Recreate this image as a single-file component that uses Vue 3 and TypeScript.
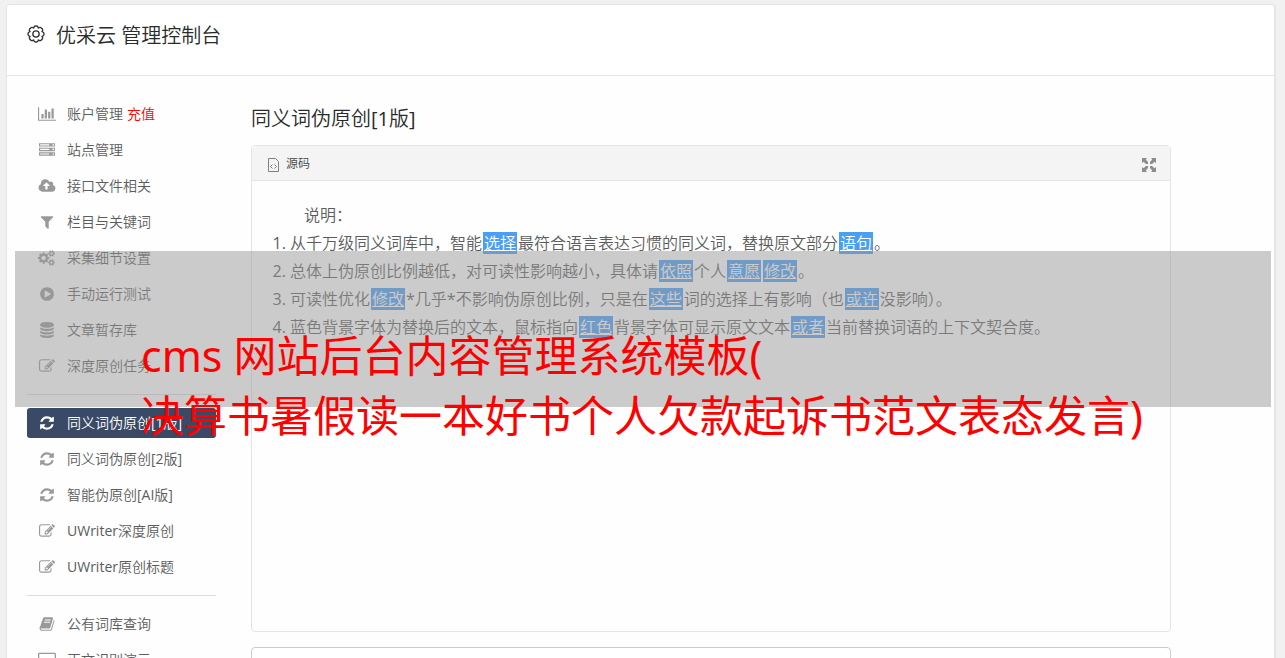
<script setup lang="ts">
interface Icon {
  box: string
  path: string
}

interface MenuItem {
  label: string
  icon: string
  note?: string
  active?: boolean
}

interface Piece {
  text: string
  mark?: boolean
}

const icons: Record<string, Icon> = {
  chart: {
    box: '0 0 2048 1792',
    path: 'M640 896v512h-256v-512h256zm384-512v1024h-256v-1024h256zm1024 1152v128h-2048v-1536h128v1408h1920zm-640-896v768h-256v-768h256zm384-384v1152h-256v-1152h256z',
  },
  server: {
    box: '0 0 1792 1792',
    path: 'M128 1408h1024v-128h-1024v128zm0-512h1024v-128h-1024v128zm1568 448q0-40-28-68t-68-28-68 28-28 68 28 68 68 28 68-28 28-68zm-1568-960h1024v-128h-1024v128zm1568 448q0-40-28-68t-68-28-68 28-28 68 28 68 68 28 68-28 28-68zm0-512q0-40-28-68t-68-28-68 28-28 68 28 68 68 28 68-28 28-68zm96 832v384h-1792v-384h1792zm0-512v384h-1792v-384h1792zm0-512v384h-1792v-384h1792z',
  },
  cloud: {
    box: '-64 0 2048 1792',
    path: 'M1280 864q0-14-9-23l-352-352q-9-9-23-9t-23 9l-351 351q-10 12-10 24 0 14 9 23t23 9h224v352q0 13 9.500 22.500t22.500 9.500h192q13 0 22.500-9.500t9.500-22.500v-352h224q13 0 22.500-9.500t9.500-22.500zm640 288q0 159-112.500 271.500t-271.500 112.500h-1088q-185 0-316.500-131.500t-131.500-316.500q0-130 70-240t188-165q-2-30-2-43 0-212 150-362t362-150q156 0 285.500 87t188.500 231q71-62 166-62 106 0 181 75t75 181q0 76-41 138 130 31 213.500 135.500t83.500 238.500z',
  },
  filter: {
    box: '0 0 1792 1792',
    path: 'M1595 295q17 41-14 70l-493 493v742q0 42-39 59-13 5-25 5-27 0-45-19l-256-256q-19-19-19-45v-486l-493-493q-31-29-14-70 17-39 59-39h1280q42 0 59 39z',
  },
  cogs: {
    box: '-64 0 2048 1792',
    path: 'M832 896q0-106-75-181t-181-75-181 75-75 181 75 181 181 75 181-75 75-181zm768 512q0-52-38-90t-90-38-90 38-38 90q0 53 37.500 90.500t90.500 37.500 90.500-37.500 37.500-90.500zm0-1024q0-52-38-90t-90-38-90 38-38 90q0 53 37.500 90.500t90.500 37.500 90.500-37.500 37.500-90.500zm-384 421v185q0 10-7 19.500t-16 10.500l-155 24q-11 35-32 76 34 48 90 115 7 11 7 20 0 12-7 19-23 30-82.500 89.500t-78.500 59.500q-11 0-21-7l-115-90q-37 19-77 31-11 108-23 155-7 24-30 24h-186q-11 0-20-7.500t-10-17.500l-23-153q-34-10-75-31l-118 89q-7 7-20 7-11 0-21-8-144-133-144-160 0-9 7-19 10-14 41-53t47-61q-23-44-35-82l-152-24q-10-1-17-9.500t-7-19.500v-185q0-10 7-19.500t16-10.500l155-24q11-35 32-76-34-48-90-115-7-11-7-20 0-12 7-20 22-30 82-89t79-59q11 0 21 7l115 90q34-18 77-32 11-108 23-154 7-24 30-24h186q11 0 20 7.500t10 17.500l23 153q34 10 75 31l118-89q8-7 20-7 11 0 21 8 144 133 144 160 0 8-7 19-12 16-42 54t-45 60q23 48 34 82l152 23q10 2 17 10.500t7 19.500zm640 533v140q0 16-149 31-12 27-30 52 51 113 51 138 0 4-4 7-122 71-124 71-8 0-46-47t-52-68q-20 2-30 2t-30-2q-14 21-52 68t-46 47q-2 0-124-71-4-3-4-7 0-25 51-138-18-25-30-52-149-15-149-31v-140q0-16 149-31 13-29 30-52-51-113-51-138 0-4 4-7 4-2 35-20t59-34 30-16q8 0 46 46.500t52 67.500q20-2 30-2t30 2q51-71 92-112l6-2q4 0 124 70 4 3 4 7 0 25-51 138 17 23 30 52 149 15 149 31zm0-1024v140q0 16-149 31-12 27-30 52 51 113 51 138 0 4-4 7-122 71-124 71-8 0-46-47t-52-68q-20 2-30 2t-30-2q-14 21-52 68t-46 47q-2 0-124-71-4-3-4-7 0-25 51-138-18-25-30-52-149-15-149-31v-140q0-16 149-31 13-29 30-52-51-113-51-138 0-4 4-7 4-2 35-20t59-34 30-16q8 0 46 46.500t52 67.500q20-2 30-2t30 2q51-71 92-112l6-2q4 0 124 70 4 3 4 7 0 25-51 138 17 23 30 52 149 15 149 31z',
  },
  play: {
    box: '0 0 1792 1792',
    path: 'M896 128q209 0 385.500 103t279.500 279.500 103 385.500-103 385.500-279.500 279.500-385.500 103-385.500-103-279.500-279.500-103-385.500 103-385.500 279.500-279.500 385.500-103zm384 823q32-18 32-55t-32-55l-544-320q-31-19-64-1-32 19-32 56v640q0 37 32 56 16 8 32 8 17 0 32-9z',
  },
  database: {
    box: '0 0 1792 1792',
    path: 'M896 768q237 0 443-43t325-127v170q0 69-103 128t-280 93.500-385 34.500-385-34.500-280-93.500-103-128v-170q119 84 325 127t443 43zm0 768q237 0 443-43t325-127v170q0 69-103 128t-280 93.500-385 34.500-385-34.500-280-93.500-103-128v-170q119 84 325 127t443 43zm0-384q237 0 443-43t325-127v170q0 69-103 128t-280 93.500-385 34.500-385-34.500-280-93.500-103-128v-170q119 84 325 127t443 43zm0-1152q208 0 385 34.500t280 93.500 103 128v128q0 69-103 128t-280 93.500-385 34.500-385-34.500-280-93.500-103-128v-128q0-69 103-128t280-93.500 385-34.500z',
  },
  edit: {
    box: '0 0 1792 1792',
    path: 'M888 1184l116-116-152-152-116 116v56h96v96h56zm440-720q-16-16-33 1l-350 350q-17 17-1 33t33-1l350-350q17-17 1-33zm80 594v190q0 119-84.500 203.500t-203.500 84.500h-832q-119 0-203.500-84.500t-84.500-203.500v-832q0-119 84.500-203.500t203.500-84.500h832q63 0 117 25 15 7 18 23 3 17-9 29l-49 49q-14 14-32 8-23-6-45-6h-832q-66 0-113 47t-47 113v832q0 66 47 113t113 47h832q66 0 113-47t47-113v-126q0-13 9-22l64-64q15-15 35-7t20 29zm-96-738l288 288-672 672h-288v-288zm444 132l-92 92-288-288 92-92q28-28 68-28t68 28l152 152q28 28 28 68t-28 68z',
  },
  refresh: {
    box: '0 0 1792 1792',
    path: 'M1639 1056q0 5-1 7-64 268-268 434.500t-478 166.500q-146 0-282.500-55t-243.500-157l-129 129q-19 19-45 19t-45-19-19-45v-448q0-26 19-45t45-19h448q26 0 45 19t19 45-19 45l-137 137q71 66 161 102t187 36q134 0 250-65t186-179q11-17 53-117 8-23 30-23h192q13 0 22.500 9.500t9.500 22.500zm25-800v448q0 26-19 45t-45 19h-448q-26 0-45-19t-19-45 19-45l138-138q-148-137-349-137-134 0-250 65t-186 179q-11 17-53 117-8 23-30 23h-199q-13 0-22.500-9.500t-9.500-22.500v-7q65-268 270-434.500t480-166.500q146 0 284 55.500t245 156.500l130-129q19-19 45-19t45 19 19 45z',
  },
  book: {
    box: '0 0 1792 1792',
    path: 'M1703 478q40 57 18 129l-275 906q-19 64-76.500 107.500t-122.500 43.500h-923q-77 0-148.500-53.500t-99.500-131.500q-24-67-2-127 0-4 3-27t4-37q1-8-3-21.500t-3-19.500q2-11 8-21t16.500-23.500 16.500-23.500q23-38 45-91.500t30-91.500q3-10 .5-30t-.5-28q3-11 17-28t17-23q21-36 42-92t25-90q1-9-2.500-32t.5-28q4-13 22-30.500t22-22.500q19-26 42.500-84.500t27.500-96.500q1-8-3-25.500t-2-26.500q2-8 9-18t18-23 17-21q8-12 16.500-30.500t15-35 16-36 19.500-32 26.500-23.500 36-11.500 47.500 5.500l-1 3q38-9 51-9h761q74 0 114 56t18 130l-274 906q-36 119-71.500 153.500t-128.500 34.500h-869q-27 0-38 15-11 16-1 43 24 70 144 70h923q29 0 56-15.500t35-41.500l300-987q7-22 5-57 38 15 59 43zm-1064 2q-4 13 2 22.500t20 9.500h608q13 0 25.500-9.500t16.500-22.500l21-64q4-13-2-22.500t-20-9.500h-608q-13 0-25.500 9.500t-16.500 22.500zm-83 256q-4 13 2 22.500t20 9.500h608q13 0 25.500-9.500t16.500-22.500l21-64q4-13-2-22.500t-20-9.500h-608q-13 0-25.500 9.500t-16.500 22.500z',
  },
  screen: {
    box: '0 0 2048 1792',
    path: 'M160 64h1728q160 0 160 160v1120q0 160-160 160h-1728q-160 0-160-160v-1120q0-160 160-160zm-16 144v1152h1760v-1152z',
  },
}

const groups: MenuItem[][] = [
  [
    { label: '账户管理', icon: 'chart', note: '充值' },
    { label: '站点管理', icon: 'server' },
    { label: '接口文件相关', icon: 'cloud' },
    { label: '栏目与关键词', icon: 'filter' },
    { label: '采集细节设置', icon: 'cogs' },
    { label: '手动运行测试', icon: 'play' },
    { label: '文章暂存库', icon: 'database' },
    { label: '深度原创任务', icon: 'edit' },
  ],
  [
    { label: '同义词伪原创[1版]', icon: 'refresh', active: true },
    { label: '同义词伪原创[2版]', icon: 'refresh' },
    { label: '智能伪原创[AI版]', icon: 'refresh' },
    { label: 'UWriter深度原创', icon: 'edit' },
    { label: 'UWriter原创标题', icon: 'edit' },
  ],
  [
    { label: '公有词库查询', icon: 'book' },
    { label: '正文识别演示', icon: 'screen' },
  ],
]

const notes: Piece[][] = [
  [
    { text: '从千万级同义词库中，智能' },
    { text: '选择', mark: true },
    { text: '最符合语言表达习惯的同义词，替换原文部分' },
    { text: '语句', mark: true },
    { text: '。' },
  ],
  [
    { text: '总体上伪原创比例越低，对可读性影响越小，具体请' },
    { text: '依照', mark: true },
    { text: '个人' },
    { text: '意愿', mark: true },
    { text: '修改', mark: true },
    { text: '。' },
  ],
  [
    { text: '可读性优化' },
    { text: '修改', mark: true },
    { text: '*几乎*不影响伪原创比例，只是在' },
    { text: '这些', mark: true },
    { text: '词的选择上有影响（也' },
    { text: '或许', mark: true },
    { text: '没影响）。' },
  ],
  [
    { text: '蓝色背景字体为替换后的文本，鼠标指向' },
    { text: '红色', mark: true },
    { text: '背景字体可显示原文文本' },
    { text: '或者', mark: true },
    { text: '当前替换词语的上下文契合度。' },
  ],
]
</script>

<template>
  <div class="page">
    <div class="card">
      <header class="top">
        <svg class="gear" viewBox="0 0 20 20" aria-hidden="true">
          <path d="M10 1.200Q12 .8 12.600 3.200Q15.200 1.800 16.200 3.800Q18.200 4.800 16.800 7.400Q19.200 8 18.800 10Q19.200 12 16.800 12.600Q18.200 15.200 16.200 16.200Q15.200 18.200 12.600 16.800Q12 19.200 10 18.800Q8 19.200 7.400 16.800Q4.800 18.200 3.800 16.200Q1.800 15.200 3.200 12.600Q.8 12 1.200 10Q.8 8 3.200 7.400Q1.800 4.800 3.800 3.800Q4.800 1.800 7.400 3.200Q8 .8 10 1.200z" />
          <circle cx="10" cy="10" r="3.500" />
        </svg>
        <h1>优采云 管理控制台</h1>
      </header>

      <div class="columns">
        <nav class="side">
          <ul v-for="(group, g) in groups" :key="g">
            <li v-for="item in group" :key="item.label">
              <a href="#" :class="{ active: item.active }">
                <svg :viewBox="icons[item.icon].box" aria-hidden="true">
                  <path fill-rule="evenodd" :d="icons[item.icon].path" />
                </svg>
                <span>{{ item.label }}<em v-if="item.note">{{ item.note }}</em></span>
              </a>
            </li>
          </ul>
        </nav>

        <main>
          <h2>同义词伪原创[1版]</h2>
          <section class="editor">
            <div class="toolbar">
              <button type="button" class="source">
                <svg viewBox="0 0 11 14" aria-hidden="true">
                  <path d="M.5.5h7l3 3v10h-10z" />
                  <path d="M4.500 6.500l-2 2 2 2M6.500 6.500l2 2-2 2" />
                </svg>
                源码
              </button>
              <button type="button" class="expand" aria-label="全屏">
                <svg viewBox="0 0 14 14" aria-hidden="true">
                  <path d="M0 0h5L3.700 1.500 6 4v2H4L1.500 3.700 0 5zM14 0v5l-1.500-1.300L10 6H8V4l2.300-2.500L9 0zM0 14V9l1.500 1.300L4 8h2v2l-2.300 2.500L5 14zM14 14H9l1.300-1.500L8 10V8h2l2.500 2.300L14 9z" />
                </svg>
              </button>
            </div>
            <div class="text">
              <p>说明：</p>
              <ol>
                <li v-for="(line, n) in notes" :key="n">
                  <template v-for="(piece, i) in line" :key="i"><u v-if="piece.mark">{{ piece.text }}</u><template v-else>{{ piece.text }}</template></template>
                </li>
              </ol>
            </div>
          </section>
          <textarea aria-label="内容" rows="4"></textarea>
        </main>
      </div>
    </div>

    <div class="banner">
      <p>cms 网站后台内容管理系统模板(<br />决算书暑假读一本好书个人欠款起诉书范文表态发言)</p>
    </div>
  </div>
</template>

<style>
body {
  background: #f1f1f1;
}
</style>

<style scoped>
.page {
  position: relative;
  box-sizing: border-box;
  height: 100vh;
  overflow: hidden;
  padding: 4px 9px 0 6px;
  font-family: "Open Sans", "Noto Sans CJK SC DemiLight", "Noto Sans CJK SC", sans-serif;
  color: #5c5c5c;
}

.card {
  min-height: 100vh;
  border: 1px solid #e5e5e5;
  border-right-width: 2px;
  border-radius: 4px;
  background: #fefefe;
}

.top {
  display: flex;
  align-items: center;
  gap: 11px;
  height: 58px;
  padding: 0 20px 12px;
  border-bottom: 1px solid #e5e5e5;
  border-radius: 4px 4px 0 0;
  background: #fff;
}

.gear {
  width: 18px;
  height: 18px;
  fill: none;
  stroke: #333;
  stroke-width: 1.5;
}

h1,
h2 {
  margin: 0;
  font-size: 20px;
  font-weight: 400;
  line-height: 28px;
  color: #2a2a2a;
}

h1 {
  padding-top: 4px;
}

.columns {
  display: flex;
  gap: 35px;
  padding: 23px 103px 0 20px;
}

.side {
  flex: 0 0 189px;
}

ul,
ol,
p {
  margin: 0;
  padding: 0;
}

ul {
  display: grid;
  gap: 6px;
  list-style: none;
}

ul + ul {
  margin-top: 13px;
  padding-top: 13px;
  border-top: 1px solid #ddd;
}

.side a {
  display: flex;
  align-items: center;
  gap: 11px;
  height: 30px;
  padding: 0 11px;
  border-radius: 3px;
  font-size: 14px;
  color: #5c5c5c;
  white-space: nowrap;
  text-decoration: none;
}

.side svg {
  width: 18px;
  height: 16px;
  fill: #999;
}

.side span {
  padding-bottom: 2px;
}

.side a.active {
  background: #3a4a66;
  color: #fff;
}

.side a.active svg {
  fill: #fff;
}

em {
  margin-left: 4px;
  font-style: normal;
  color: #f00;
}

main {
  flex: 1;
  min-width: 0;
  padding-top: 6px;
}

.editor {
  min-height: 485px;
  margin: 12px 0 15px;
  border: 1px solid #e5e5e5;
  border-radius: 4px;
}

.toolbar {
  display: flex;
  align-items: center;
  justify-content: space-between;
  height: 34px;
  padding: 0 14px 0 16px;
  border-bottom: 1px solid #e5e5e5;
  background: #f4f4f4;
}

button {
  display: flex;
  align-items: center;
  gap: 7px;
  padding: 0;
  border: 0;
  background: none;
  font: inherit;
  font-size: 12px;
  color: #444;
}

.toolbar svg {
  margin-top: 4px;
}

.source svg {
  width: 11px;
  height: 14px;
  fill: none;
  stroke: #808080;
}

.expand svg {
  width: 14px;
  height: 14px;
  fill: #8c8c8c;
}

.text {
  padding: 20px;
  font-size: 16px;
  line-height: 28px;
}

.text p {
  padding-left: 32px;
}

ol {
  padding-left: 18px;
}

u {
  margin: 0 1px;
  padding: 0 1px;
  background: #4a9ff5;
  color: #fff;
}

textarea {
  display: block;
  box-sizing: border-box;
  width: 100%;
  border: 1px solid #ccc;
  border-radius: 4px;
  background: #fff;
  resize: none;
}

.banner {
  position: absolute;
  top: 251px;
  right: 14px;
  left: 15px;
  height: 156px;
  background: rgba(151, 151, 151, 0.5);
}

.banner p {
  padding: 75px 0 0 126px;
  font-family: "Noto Sans", "Noto Sans CJK SC", sans-serif;
  font-size: 43px;
  line-height: 60px;
  color: #f00;
  white-space: nowrap;
}
</style>
